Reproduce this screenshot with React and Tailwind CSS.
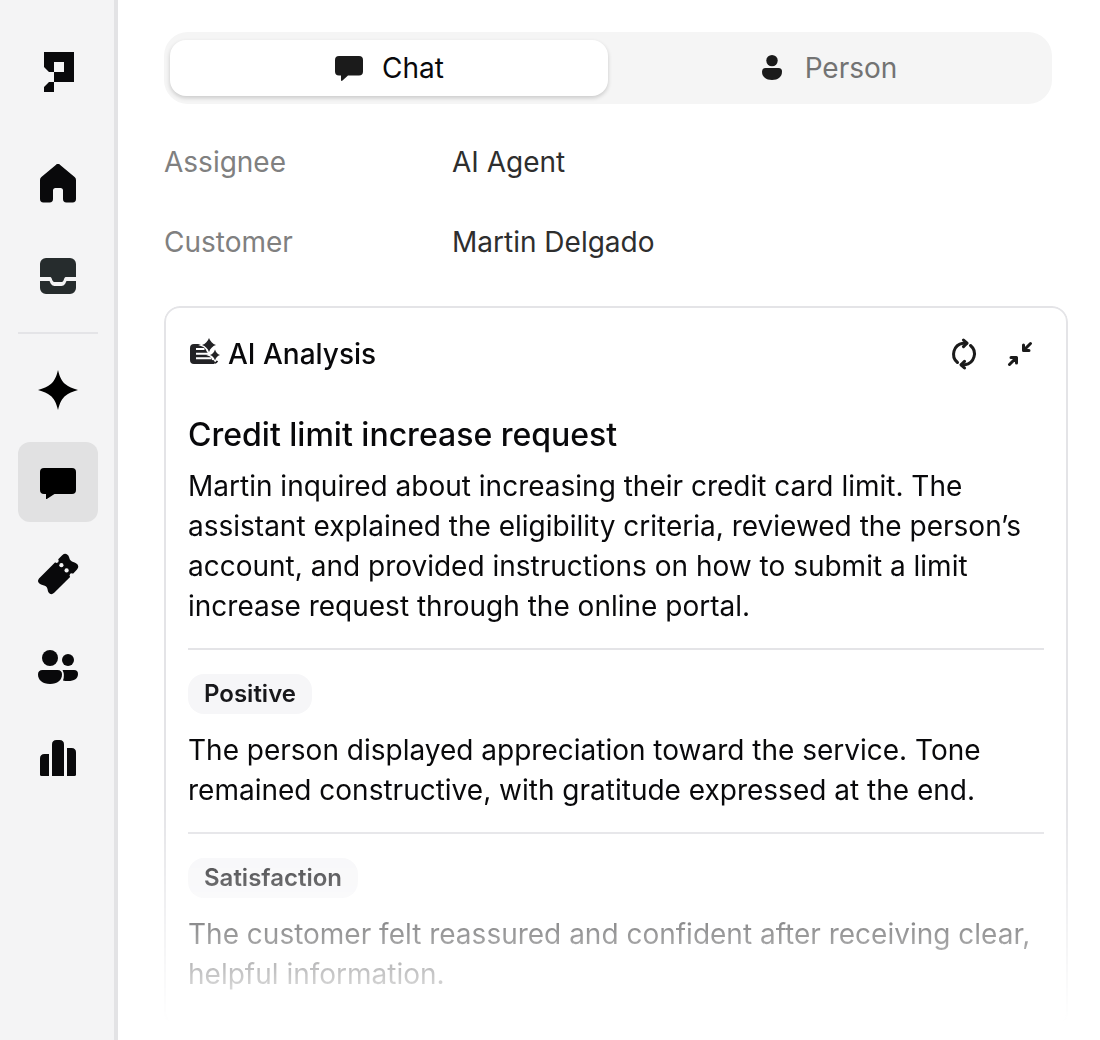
const HomeIcon = () => (
  <svg viewBox="0 0 40 40" className="h-10 w-10" fill="currentColor" aria-hidden="true">
    <path d="M17.8 .9a3.2 3.2 0 0 1 4.4 0L36.6 13Q38 14.200 38 16V35a3.400 3.400 0 0 1-3.400 3.400H28.400A3.400 3.400 0 0 1 25 35V26.500A2.500 2.500 0 0 0 22.500 24H17.500A2.500 2.500 0 0 0 15 26.500V35a3.400 3.400 0 0 1-3.400 3.400H5.400A3.400 3.400 0 0 1 2 35V16Q2 14.200 3.400 13Z" />
  </svg>
);

const InboxIcon = () => (
  <svg viewBox="0 0 40 40" className="h-10 w-10" fill="#262c2d" aria-hidden="true">
    <path d="M8 2H32a6 6 0 0 1 6 6V21H28.500C26 21 26.400 23 25.500 24.500Q24.700 26 23.500 26H16.500Q15.300 26 14.500 24.500C13.600 23 14 21 11.500 21H2V8A6 6 0 0 1 8 2Z" />
    <path d="M2 25H11.200C12 25 12 26.500 13 28Q14.300 30 16.500 30H23.500Q25.700 30 27 28C28 26.500 28 25 28.800 25H38V32a6 6 0 0 1-6 6H8a6 6 0 0 1-6-6Z" />
  </svg>
);

const SparkIcon = () => (
  <svg viewBox="0 0 40 40" className="h-10 w-10" fill="#000" aria-hidden="true">
    <path d="M20 0C21.700 7.200 24 11.500 27.500 14.300C30.500 16.800 34.500 18.500 40 20C34.500 21.500 30.500 23.200 27.500 25.700C24 28.500 21.700 32.800 20 40C18.300 32.800 16 28.500 12.500 25.700C9.500 23.200 5.500 21.500 0 20C5.500 18.500 9.500 16.800 12.500 14.300C16 11.500 18.300 7.200 20 0Z" />
  </svg>
);

const ChatIcon = () => (
  <svg viewBox="0 0 40 40" className="h-10 w-10" fill="currentColor" aria-hidden="true">
    <path d="M6 6H34a4 4 0 0 1 4 4V28a4 4 0 0 1-4 4H16.500L8.800 37Q8 37.400 8 36.400V32H6a4 4 0 0 1-4-4V10a4 4 0 0 1 4-4Z" />
  </svg>
);

const ChatTabIcon = () => (
  <svg viewBox="0 0 32 32" className="h-8 w-8 text-[#1b1b1b]" fill="currentColor" aria-hidden="true">
    <path d="M5 4H25a4 4 0 0 1 4 4V19.500a4 4 0 0 1-4 4H14L8.500 28.600Q7 29.400 7 28V23.500H5a4 4 0 0 1-4-4V8a4 4 0 0 1 4-4Z" />
  </svg>
);

const TicketIcon = () => (
  <svg viewBox="0 0 40 40" className="h-10 w-10 overflow-visible" fill="currentColor" aria-hidden="true">
    <path d="M24.200 1.200Q27.600-1.800 30.300 1.500C31.600 3.500 31.200 5 32.700 6.600C34.400 8.400 36 8 38 9.200Q42 11.800 39 15.600L34.800 20L32.600 22.400L16.200 38.800Q13 41.600 10.600 38.600C9.400 36.800 10 35 8.600 33C7.200 31.200 5 31.400 3 30.400Q-1.800 28 1 24.400Z" />
    <g fill="#f4f4f5">
      <circle cx="18.600" cy="6.800" r="2.100" />
      <circle cx="23.400" cy="11.200" r="2.100" />
      <circle cx="28.600" cy="16.400" r="2.100" />
      <circle cx="33.700" cy="21.400" r="2.100" />
    </g>
  </svg>
);

const PeopleIcon = () => (
  <svg viewBox="0 0 40 40" className="h-10 w-10" fill="currentColor" aria-hidden="true">
    <circle cx="12" cy="12" r="8" />
    <circle cx="30" cy="14" r="6" />
    <path d="M4.500 24H19.500Q24 24 24 28.500C24 34 19.500 38 12 38S0 34 0 28.500Q0 24 4.500 24Z" />
    <path d="M24.500 24H36Q40 24 40 28C40 32.600 36.500 35 30 35Q27 35 25 34.400Q27 29 24.500 24Z" />
  </svg>
);

const ChartIcon = () => (
  <svg viewBox="0 0 40 40" className="h-10 w-10" fill="currentColor" aria-hidden="true">
    <path d="M11 16V38H3.500Q2 38 2 36.500V20.500Q2 16 6.500 16Z" />
    <path d="M14 38V6.500Q14 2 18.500 2H21.500Q26 2 26 6.500V38Z" />
    <path d="M29 10H33.500Q38 10 38 14.500V36.500Q38 38 36.500 38H29Z" />
  </svg>
);

const PersonIcon = () => (
  <svg viewBox="0 0 32 32" className="h-8 w-8" fill="currentColor" aria-hidden="true">
    <circle cx="15" cy="8.600" r="5.700" />
    <path d="M8.500 16H21.500Q25 16 25 19.500C25 25 21 28 15 28S5 25 5 19.500Q5 16 8.500 16Z" />
  </svg>
);

const AnalysisIcon = () => (
  <svg viewBox="0 0 32 32" className="h-8 w-8" fill="none" aria-hidden="true">
    <path
      d="M6 6H15L19 14 22 17 24 22 29.500 23Q28.500 26 26 26H6Q2 26 2 22V10Q2 6 6 6Z"
      fill="#222225"
    />
    <path d="M8 11H16.500M8 15.700H21M8 20.300H23" stroke="#fff" strokeWidth="2" />
    <g fill="#222225" stroke="#fff" strokeWidth="2.500" paintOrder="stroke">
      <path d="M21 0Q22.800 5.200 28 7Q22.800 8.800 21 14Q19.200 8.800 14 7Q19.200 5.200 21 0Z" />
      <path d="M27 11.500Q28.300 15.700 32 17Q28.300 18.300 27 22.500Q25.700 18.300 22 17Q25.700 15.700 27 11.500Z" />
    </g>
    <path d="M25 22.500Q27 26.500 29.500 23" stroke="#222225" strokeWidth="1.500" />
  </svg>
);

const RefreshIcon = () => (
  <svg
    viewBox="0 0 32 32"
    className="h-8 w-8"
    fill="none"
    stroke="currentColor"
    strokeWidth="3"
    strokeLinecap="round"
    strokeLinejoin="round"
    aria-hidden="true"
  >
    <path d="M9.500 24.500A11 11 0 0 1 15 5.200H18.500" />
    <path d="M22.500 7.500A11 11 0 0 1 17 26.800H13.500" />
    <path d="M15.500 2 19 5.200 15.500 8.600" />
    <path d="M16.500 23.400 13 26.800 16.500 30" />
  </svg>
);

const CollapseIcon = () => (
  <svg
    viewBox="0 0 32 32"
    className="h-8 w-8"
    fill="none"
    stroke="currentColor"
    strokeWidth="3"
    strokeLinecap="round"
    strokeLinejoin="round"
    aria-hidden="true"
  >
    <path d="M26.500 5.500 20 12M19.500 7V12.500H25" />
    <path d="M5.500 26.500 12 20M7 19.500H12.500V25" />
  </svg>
);

const Logo = () => (
  <svg viewBox="-2 0 32 40" className="h-10 w-8" fill="currentColor" aria-hidden="true">
    <path
      fillRule="evenodd"
      d="M0 0H30V30H10V40H0V35L5 30H10V20H5L0 15ZM10 10V20H20V10Z"
    />
  </svg>
);

const NavItem = ({ label, active = false, children }) => (
  <a
    href="#"
    aria-label={label}
    aria-current={active ? 'page' : undefined}
    className={`flex h-20 w-20 items-center justify-center rounded-xl ${active ? 'bg-[#e1e1e2] text-black' : ''}`}
  >
    {children}
  </a>
);

const Sidebar = () => (
  <nav className="shrink-0 border-r-4 border-[#e3e3e5] bg-[#f4f4f5] py-8 pr-4 pl-[18px] text-[#09090b]">
    <a href="#" aria-label="Dashboard" className="mb-8 flex h-20 w-20 items-center justify-center">
      <Logo />
    </a>
    <div className="flex flex-col gap-3">
      <NavItem label="Home">
        <HomeIcon />
      </NavItem>
      <NavItem label="Inbox">
        <InboxIcon />
      </NavItem>
    </div>
    <hr className="my-4 border-t-2 border-[#e4e4e7]" />
    <div className="flex flex-col gap-3">
      <NavItem label="AI">
        <SparkIcon />
      </NavItem>
      <NavItem label="Chats" active>
        <ChatIcon />
      </NavItem>
      <NavItem label="Tickets">
        <TicketIcon />
      </NavItem>
      <NavItem label="People">
        <PeopleIcon />
      </NavItem>
      <NavItem label="Reports">
        <ChartIcon />
      </NavItem>
    </div>
  </nav>
);

const Tabs = () => (
  <div role="tablist" className="mr-4 grid grid-cols-2 rounded-3xl bg-[#f5f5f5] px-1.5 py-2">
    <button
      type="button"
      role="tab"
      aria-selected="true"
      className="flex h-14 items-center justify-center gap-4 rounded-2xl bg-white text-[#09090b] shadow-[0_2px_4px_rgba(0,0,0,0.18)]"
    >
      <ChatTabIcon />
      Chat
    </button>
    <button
      type="button"
      role="tab"
      aria-selected="false"
      className="flex h-14 items-center justify-center gap-4 rounded-2xl text-[#737373]"
    >
      <span className="text-[#1b1b1b]">
        <PersonIcon />
      </span>
      Person
    </button>
  </div>
);

const Field = ({ label, value }) => (
  <div className="flex">
    <dt className="w-72 shrink-0 text-[#808080]">{label}</dt>
    <dd className="text-[#2e2e2e]">{value}</dd>
  </div>
);

const Insight = ({ tag, children }) => (
  <section className="mt-[22px] border-t-2 border-[#e4e4e7] pt-6">
    <span className="inline-block rounded-2xl bg-[#f6f6f8] px-4 align-top text-2xl/10 font-semibold text-[#18181b]">
      {tag}
    </span>
    <p className="mt-4">{children}</p>
  </section>
);

const AnalysisCard = () => (
  <article className="mt-11 rounded-2xl border-2 border-[#e4e4e7] px-[22px] pt-[26px] pb-8 text-[#09090b] [mask-image:linear-gradient(to_top,transparent_4px,black_220px)]">
    <header className="flex items-center justify-between">
      <h2 className="flex items-center gap-2 font-medium">
        <AnalysisIcon />
        AI Analysis
      </h2>
      <div className="mr-2 flex gap-6 text-[#1b1b1b]">
        <button type="button" aria-label="Refresh analysis">
          <RefreshIcon />
        </button>
        <button type="button" aria-label="Collapse analysis">
          <CollapseIcon />
        </button>
      </div>
    </header>
    <h3 className="mt-10 text-[32px]/[42px] font-medium">Credit limit increase request</h3>
    <p className="mt-2.5">
      Martin inquired about increasing their credit card limit. The assistant explained the eligibility criteria,
      reviewed the person’s account, and provided instructions on how to submit a limit increase request through the
      online portal.
    </p>
    <Insight tag="Positive">
      The person displayed appreciation toward the service. Tone remained constructive, with gratitude expressed at the
      end.
    </Insight>
    <Insight tag="Satisfaction">
      The customer felt reassured and confident after receiving clear, helpful information.
    </Insight>
  </article>
);

export default function App() {
  return (
    <div className="flex min-h-screen bg-white font-['Inter',sans-serif] text-[28px]/10">
      <Sidebar />
      <main className="min-w-0 flex-1 pt-8 pr-8 pl-[46px]">
        <Tabs />
        <dl className="mt-[38px] flex flex-col gap-10">
          <Field label="Assignee" value="AI Agent" />
          <Field label="Customer" value="Martin Delgado" />
        </dl>
        <AnalysisCard />
      </main>
    </div>
  );
}
